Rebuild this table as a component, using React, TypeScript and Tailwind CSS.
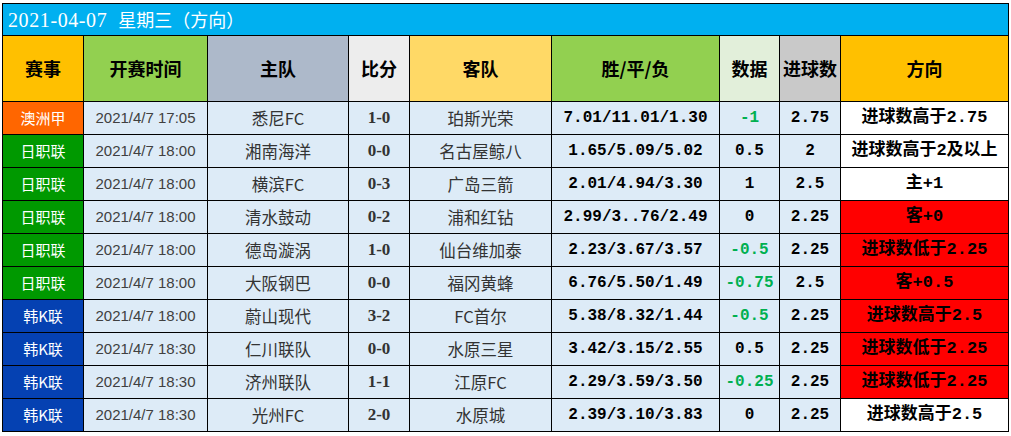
const rows = [
  { lg: '澳洲甲', lc: 'bg-[#ff6600]', t: '2021/4/7 17:05', h: '悉尼FC', s: '1-0', a: '珀斯光荣', o: '7.01/11.01/1.30', d: '-1', g: '2.75', dir: '进球数高于2.75', red: false },
  { lg: '日职联', lc: 'bg-[#009900]', t: '2021/4/7 18:00', h: '湘南海洋', s: '0-0', a: '名古屋鲸八', o: '1.65/5.09/5.02', d: '0.5', g: '2', dir: '进球数高于2及以上', red: false },
  { lg: '日职联', lc: 'bg-[#009900]', t: '2021/4/7 18:00', h: '横滨FC', s: '0-3', a: '广岛三箭', o: '2.01/4.94/3.30', d: '1', g: '2.5', dir: '主+1', red: false },
  { lg: '日职联', lc: 'bg-[#009900]', t: '2021/4/7 18:00', h: '清水鼓动', s: '0-2', a: '浦和红钻', o: '2.99/3..76/2.49', d: '0', g: '2.25', dir: '客+0', red: true },
  { lg: '日职联', lc: 'bg-[#009900]', t: '2021/4/7 18:00', h: '德岛漩涡', s: '1-0', a: '仙台维加泰', o: '2.23/3.67/3.57', d: '-0.5', g: '2.25', dir: '进球数低于2.25', red: true },
  { lg: '日职联', lc: 'bg-[#009900]', t: '2021/4/7 18:00', h: '大阪钢巴', s: '0-0', a: '福冈黄蜂', o: '6.76/5.50/1.49', d: '-0.75', g: '2.5', dir: '客+0.5', red: true },
  { lg: '韩K联', lc: 'bg-[#0541b2]', t: '2021/4/7 18:00', h: '蔚山现代', s: '3-2', a: 'FC首尔', o: '5.38/8.32/1.44', d: '-0.5', g: '2.25', dir: '进球数高于2.5', red: true },
  { lg: '韩K联', lc: 'bg-[#0541b2]', t: '2021/4/7 18:30', h: '仁川联队', s: '0-0', a: '水原三星', o: '3.42/3.15/2.55', d: '0.5', g: '2.25', dir: '进球数低于2.25', red: true },
  { lg: '韩K联', lc: 'bg-[#0541b2]', t: '2021/4/7 18:30', h: '济州联队', s: '1-1', a: '江原FC', o: '2.29/3.59/3.50', d: '-0.25', g: '2.25', dir: '进球数低于2.25', red: true },
  { lg: '韩K联', lc: 'bg-[#0541b2]', t: '2021/4/7 18:30', h: '光州FC', s: '2-0', a: '水原城', o: '2.39/3.10/3.83', d: '0', g: '2.25', dir: '进球数高于2.5', red: false },
]

const heads = [
  { k: '赛事', c: 'bg-[#ffc000]' },
  { k: '开赛时间', c: 'bg-[#92d050]' },
  { k: '主队', c: 'bg-[#adb9ca]' },
  { k: '比分', c: 'bg-[#ededed]' },
  { k: '客队', c: 'bg-[#ffd966]' },
  { k: '胜/平/负', c: 'bg-[#92d050]' },
  { k: '数据', c: 'bg-[#e2efda]' },
  { k: '进球数', c: 'bg-[#c9c9c9]' },
  { k: '方向', c: 'bg-[#ffc000]' },
]

const cell = 'flex items-center justify-center whitespace-nowrap overflow-hidden'
const cjk = "font-['Noto_Sans_CJK_SC',sans-serif] text-[16.5px] text-[#333]"
const mono = "font-['Liberation_Mono','Noto_Sans_CJK_SC',monospace] font-bold text-[16px]"

export default function App() {
  return (
    <div className="w-[1011px] h-[436px] bg-white overflow-hidden">
      <div className="ml-[2px] mt-[3px] w-[1007px] grid grid-cols-[80px_123px_140px_60px_141px_167px_59px_60px_167px] grid-rows-[31px_65px_repeat(10,32px)] gap-px p-px bg-black">
        <div className="col-span-9 bg-[#00b0f0] flex items-center pl-[5px] text-white">
          <span className="text-[20px] tracking-[0.6px] font-['Liberation_Serif',serif]">2021-04-07</span>
          <span className="ml-[11px] text-[18px] font-['Noto_Sans_CJK_SC',sans-serif]">星期三（方向）</span>
        </div>
        {heads.map(h => (
          <div key={h.k} className={`${cell} ${h.c} font-['Noto_Sans_CJK_SC',sans-serif] font-bold text-[18px] text-black`}>
            {h.k}
          </div>
        ))}
        {rows.map((r, i) => (
          <Row key={i} r={r} />
        ))}
      </div>
    </div>
  )
}

function Row({ r }: { r: typeof rows[number] }) {
  var neg = r.d.startsWith('-')
  return (
    <>
      <div className={`${cell} ${r.lc} text-white text-[15px] font-['Noto_Sans_CJK_SC',sans-serif]`}>{r.lg}</div>
      <div className={`${cell} bg-[#ddebf7] text-[15px] text-[#404040] font-['Liberation_Sans',sans-serif]`}>{r.t}</div>
      <div className={`${cell} bg-[#ddebf7] ${cjk}`}>{r.h}</div>
      <div className={`${cell} bg-[#ddebf7] font-['Liberation_Serif',serif] font-bold text-[17px] text-[#333]`}>{r.s}</div>
      <div className={`${cell} bg-[#ddebf7] ${cjk}`}>{r.a}</div>
      <div className={`${cell} bg-[#ddebf7] ${mono} text-black`}>{r.o}</div>
      <div className={`${cell} bg-[#ddebf7] ${mono} ${neg ? 'text-[#00b050]' : 'text-black'}`}>{r.d}</div>
      <div className={`${cell} bg-[#ddebf7] ${mono} text-black`}>{r.g}</div>
      <div className={`${cell} ${r.red ? 'bg-[#ff0000]' : 'bg-white'} font-['Liberation_Mono','Noto_Sans_CJK_SC',monospace] font-bold text-[17px] text-black`}>{r.dir}</div>
    </>
  )
}
